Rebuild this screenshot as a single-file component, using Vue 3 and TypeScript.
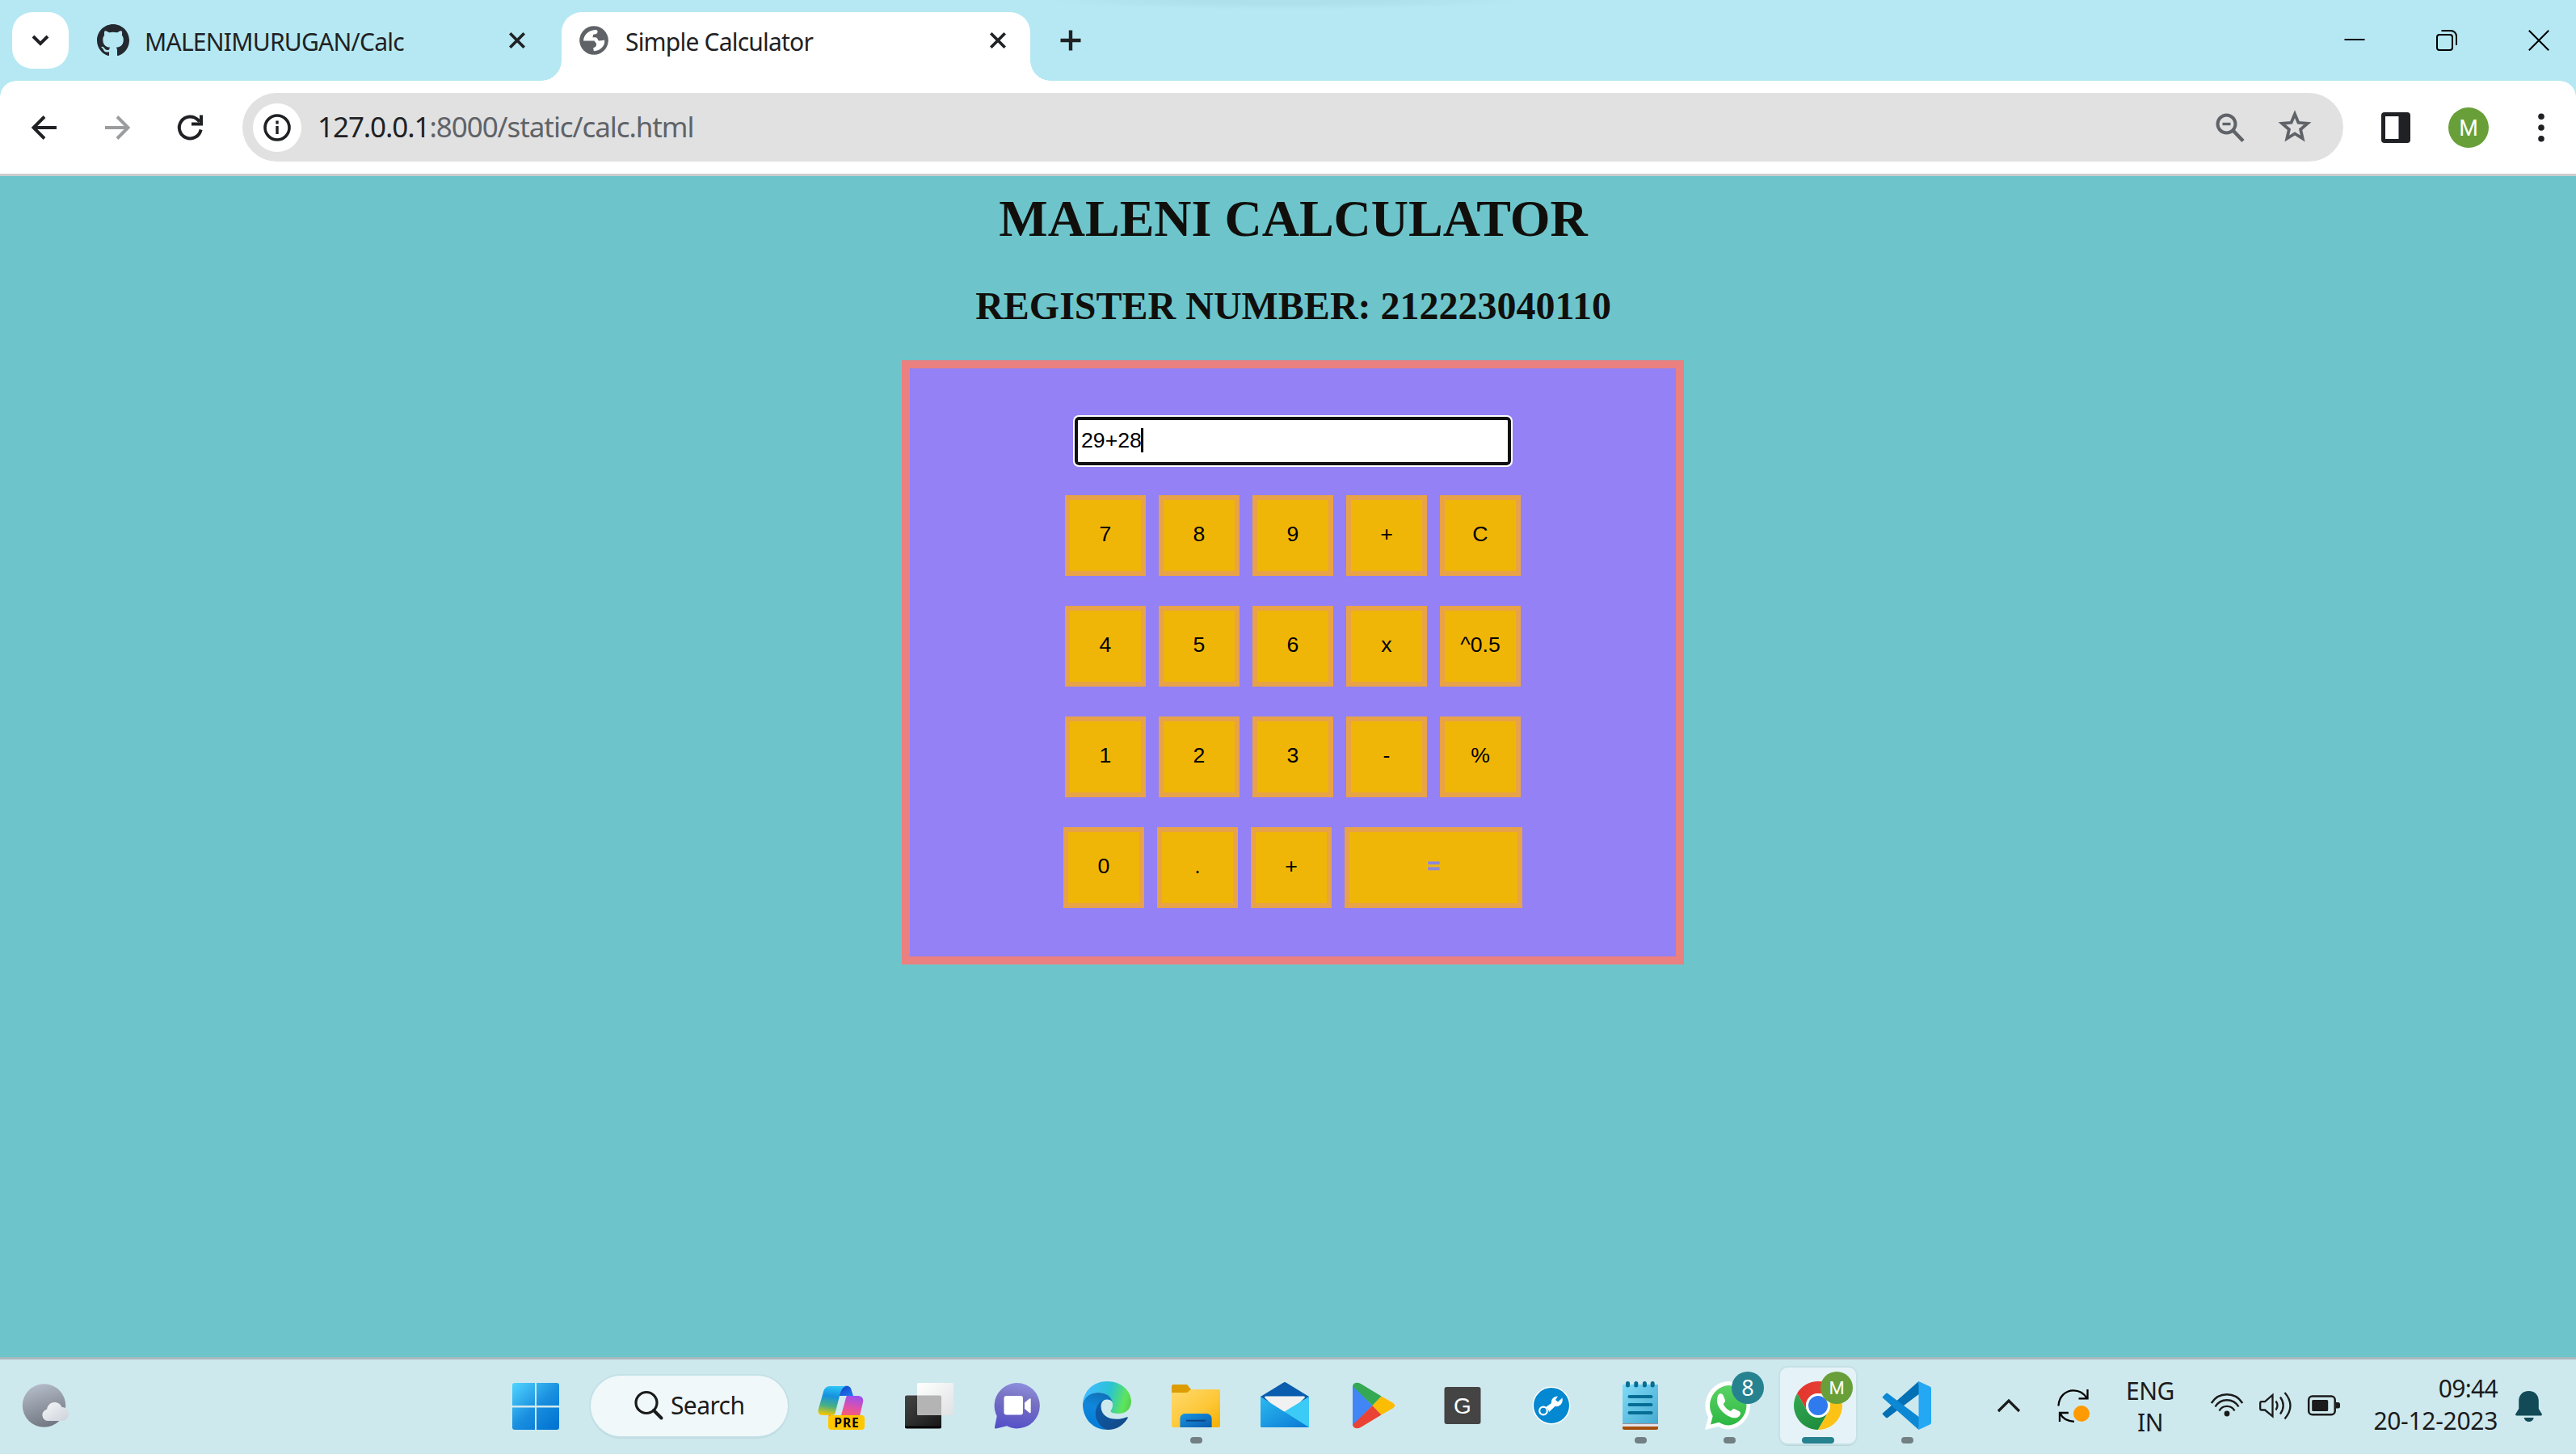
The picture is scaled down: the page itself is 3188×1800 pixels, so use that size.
<script setup lang="ts">
import { ref } from 'vue'

interface Key {
  label: string
  wide?: boolean
}

const rows: Key[][] = [
  [{ label: '7' }, { label: '8' }, { label: '9' }, { label: '+' }, { label: 'C' }],
  [{ label: '4' }, { label: '5' }, { label: '6' }, { label: 'x' }, { label: '^0.5' }],
  [{ label: '1' }, { label: '2' }, { label: '3' }, { label: '-' }, { label: '%' }],
  [{ label: '0' }, { label: '.' }, { label: '+' }, { label: '=', wide: true }],
]

const display = ref('29+28')
</script>

<template>
  <div class="screen">
    <header class="tabstrip">
      <div class="tab-search">
        <svg width="70" height="70" viewBox="0 0 70 70"><path d="M26 30l9 9 9-9" fill="none" stroke="#202124" stroke-width="4" /></svg>
      </div>
      <div class="tab">
        <svg class="github" width="40" height="40" viewBox="0 0 16 16"><path fill="#24292f" d="M8 0C3.58 0 0 3.58 0 8c0 3.54 2.29 6.53 5.47 7.59.4.07.55-.17.55-.38 0-.19-.01-.82-.01-1.49-2.01.37-2.53-.49-2.69-.94-.09-.23-.48-.94-.82-1.13-.28-.15-.68-.52-.01-.53.63-.01 1.08.58 1.23.82.72 1.21 1.87.87 2.33.66.07-.52.28-.87.51-1.07-1.78-.2-3.64-.89-3.64-3.95 0-.87.31-1.59.82-2.15-.08-.2-.36-1.02.08-2.12 0 0 .67-.21 2.2.82.64-.18 1.32-.27 2-.27s1.36.09 2 .27c1.53-1.04 2.2-.82 2.2-.82.44 1.1.16 1.92.08 2.12.51.56.82 1.27.82 2.15 0 3.07-1.87 3.75-3.65 3.95.29.25.54.73.54 1.48 0 1.07-.01 1.93-.01 2.2 0 .21.15.46.55.38A8.01 8.01 0 0 0 16 8c0-4.42-3.58-8-8-8z" /></svg>
        <span class="tab-title repo">MALENIMURUGAN/Calc</span>
        <svg width="20" height="20" viewBox="0 0 20 20"><path d="M1.3 1.3l17.4 17.4M18.7 1.3L1.3 18.7" stroke="#202124" stroke-width="3.7" /></svg>
      </div>
      <div class="tab active">
        <svg width="36" height="36" viewBox="21 22 107 107"><circle cx="74.500" cy="75.500" r="53" fill="#5f6368" /><path d="M36 77C37 55 55 37 84 36l5 8-5 8-12 2-2 10h10c10 2 8 12 14 13l19-2-1-8C120 92 102 112 74 115l-2-11 10-6 2-10-8-11z" fill="#fff" /></svg>
        <span class="tab-title">Simple Calculator</span>
        <svg width="20" height="20" viewBox="0 0 20 20"><path d="M1.3 1.3l17.4 17.4M18.7 1.3L1.3 18.7" stroke="#202124" stroke-width="3.7" /></svg>
      </div>
      <svg class="new-tab" width="26" height="26" viewBox="0 0 26 26"><path d="M13 .5v25M.5 13h25" stroke="#202124" stroke-width="4.400" /></svg>
      <div class="window-buttons">
        <svg width="26" height="26" viewBox="0 0 26 26"><path d="M.5 12h25" stroke="#000" stroke-width="2" /></svg>
        <svg width="26" height="26" viewBox="0 0 26 26"><g fill="none" stroke="#000" stroke-width="2"><rect x="1" y="6" width="19" height="19" rx="3" /><path d="M6.500 1H18a7 7 0 0 1 7 7v11" /></g></svg>
        <svg width="26" height="26" viewBox="0 0 26 26"><path d="M.8.8l24.400 24.400M25.200.8L.8 25.200" stroke="#000" stroke-width="2" /></svg>
      </div>
    </header>

    <nav class="toolbar">
      <svg width="60" height="60" viewBox="0 0 60 60"><path d="M45 30H18M30 16.500L16.500 30 30 43.500" fill="none" stroke="#202124" stroke-width="3.900" /></svg>
      <svg class="forward" width="60" height="60" viewBox="0 0 60 60"><path d="M15 30h27M30 16.500L43.500 30 30 43.500" fill="none" stroke="#9b9c9e" stroke-width="3.900" /></svg>
      <svg width="60" height="60" viewBox="0 0 60 60"><path d="M43.600 32.500A13.500 13.500 0 1 1 40 20.500l2 2" fill="none" stroke="#202124" stroke-width="4" /><path d="M42 14.500h4v13H32v-4h10z" fill="#202124" /></svg>
      <div class="omnibox">
        <span class="site-info">
          <svg width="36" height="36" viewBox="0 0 36 36"><circle cx="18" cy="18" r="15" fill="none" stroke="#202124" stroke-width="3.600" /><path d="M18 16v10M18 9.500v4" stroke="#202124" stroke-width="3.400" /></svg>
        </span>
        <span class="url"><b>127.0.0.1</b>:8000/static/calc.html</span>
        <svg width="36" height="36" viewBox="0 0 36 36"><g fill="none" stroke="#5f6368" stroke-width="4"><circle cx="13.500" cy="13.500" r="11" /><path d="M21.500 21.500L34 34.500" stroke-width="4.500" /><path d="M8.500 13.500h10" stroke-width="3.400" /></g></svg>
        <svg class="star" width="42" height="40" viewBox="0 0 42 40"><path d="M21 5.200l4.400 10.600 11.400 1-8.700 7.500 2.600 11.200L21 29.500l-9.700 6 2.600-11.200-8.700-7.500 11.400-1z" fill="none" stroke="#5f6368" stroke-width="3.800" /></svg>
      </div>
      <svg class="side-panel" width="36" height="38" viewBox="0 0 36 38"><rect width="36" height="38" rx="4" fill="#202124" /><path d="M5 5h16.500v28H5z" fill="#fff" /></svg>
      <span class="avatar">M</span>
      <svg class="menu" width="20" height="40" viewBox="0 0 20 40"><g fill="#202124"><circle cx="10" cy="6.300" r="3.800" /><circle cx="10" cy="20" r="3.800" /><circle cx="10" cy="33.700" r="3.800" /></g></svg>
    </nav>

    <main class="page">
      <h1>MALENI CALCULATOR</h1>
      <h2>REGISTER NUMBER: 212223040110</h2>
      <form class="calculator" @submit.prevent>
        <div class="display"><span>{{ display }}</span><i class="caret"></i></div>
        <div v-for="(row, i) in rows" :key="i" class="key-row">
          <button v-for="(k, j) in row" :key="j" type="button" :class="{ wide: k.wide }">{{ k.label }}</button>
        </div>
      </form>
    </main>

    <footer class="taskbar">
      <svg class="weather" width="60" height="60" viewBox="0 0 60 60">
        <defs>
          <linearGradient id="moon" x1="0.300" y1="0" x2="0.600" y2="1"><stop offset="0" stop-color="#b4bcc9" /><stop offset="1" stop-color="#71767f" /></linearGradient>
          <linearGradient id="cloud" x1="0" y1="0" x2="1" y2="1"><stop offset="0" stop-color="#f6f7f9" /><stop offset="1" stop-color="#ccd2da" /></linearGradient>
        </defs>
        <circle cx="29.500" cy="30" r="26.700" fill="url(#moon)" />
        <path d="M34 49a7.200 7.200 0 0 1-1-14.200c1-5.500 5-8.800 9.500-8.800 4.300 0 7.500 2.200 9 6 4.800-.3 8.500 3.500 8.500 8s-3.500 9-8.500 9z" fill="url(#cloud)" />
      </svg>

      <svg class="start" width="60" height="60" viewBox="0 0 60 60">
        <defs><linearGradient id="win" gradientUnits="userSpaceOnUse" x1="2" y1="2" x2="52" y2="58"><stop offset="0" stop-color="#4fd4ff" /><stop offset="0.550" stop-color="#1a8fdf" /><stop offset="1" stop-color="#0275d2" /></linearGradient></defs>
        <g fill="url(#win)"><path d="M4 2h25v28H1V5a3 3 0 0 1 3-3z" /><path d="M31 2h25a3 3 0 0 1 3 3v25H31z" /><path d="M1 32.500h28V60H4a3 3 0 0 1-3-3z" /><path d="M31 32.500h28V57a3 3 0 0 1-3 3H31z" /></g>
      </svg>

      <div class="search">
        <svg width="36" height="36" viewBox="0 0 36 36"><g fill="none" stroke="#1b1b1b" stroke-width="3.200"><circle cx="15" cy="14.500" r="13" /><path d="M24 24l9.500 9.500" stroke-linecap="round" stroke-width="4" /></g></svg>
        <span>Search</span>
      </div>

      <div class="apps">
        <div class="app">
          <svg width="60" height="60" viewBox="0 0 60 60">
            <defs>
              <linearGradient id="cpA" x1="0.500" y1="0" x2="0.350" y2="1"><stop offset="0" stop-color="#2cc5f6" /><stop offset="0.350" stop-color="#1591df" /><stop offset="0.700" stop-color="#4bb183" /><stop offset="1" stop-color="#f3c600" /></linearGradient>
              <linearGradient id="cpB" x1="0.700" y1="0" x2="0.400" y2="1"><stop offset="0" stop-color="#9d50ec" /><stop offset="0.500" stop-color="#e052a8" /><stop offset="1" stop-color="#ff6558" /></linearGradient>
              <linearGradient id="cpC" x1="0" y1="0" x2="1" y2="1"><stop offset="0" stop-color="#153fc4" /><stop offset="1" stop-color="#1d7df0" /></linearGradient>
            </defs>
            <path d="M35 6c6-1 8 1 9 6l2 6H28c2-8 3-11 7-12z" fill="url(#cpC)" />
            <path d="M17 6h24c-7-1-10 4-12 12l-5 20c-1 3-2 4-4 4H8c-5 0-6-3-5-8l6-21c1-4 4-7 8-7z" fill="url(#cpA)" />
            <path d="M30 19h8l-7 23h-8z" fill="#cdeaf3" />
            <path d="M38 18h14c5 0 7 4 6 8l-4 17c-.5 2-2 3-4 3H18c-2 0-3-2-2.500-4H31l6-22z" fill="url(#cpB)" />
            <rect x="15" y="42" width="45" height="18" rx="4" fill="#ffc700" />
            <text x="38" y="57" text-anchor="middle" class="pre">PRE</text>
          </svg>
        </div>
        <div class="app">
          <svg width="60" height="60" viewBox="0 0 60 60">
            <defs>
              <linearGradient id="tvA" x1="0" y1="0" x2="1" y2="1"><stop offset="0" stop-color="#454545" /><stop offset="1" stop-color="#161616" /></linearGradient>
              <linearGradient id="tvB" x1="0" y1="0" x2="1" y2="1"><stop offset="0" stop-color="#fff" /><stop offset="1" stop-color="#dfe1e2" /></linearGradient>
            </defs>
            <rect x="0" y="17.500" width="45" height="40.500" rx="2" fill="url(#tvA)" /><path d="M0 55.500h45v1a2 2 0 0 1-2 2H2a2 2 0 0 1-2-2z" fill="#050505" />
            <rect x="15" y="2" width="45" height="40" rx="2" fill="url(#tvB)" /><path d="M15 17.500h28a2 2 0 0 1 2 2V42H17a2 2 0 0 1-2-2z" fill="#b4b4b4" />
          </svg>
        </div>
        <div class="app">
          <svg width="60" height="60" viewBox="0 0 60 60">
            <defs><linearGradient id="chat" x1="0.600" y1="0" x2="0.400" y2="1"><stop offset="0" stop-color="#8e8fdf" /><stop offset="0.350" stop-color="#7873c2" /><stop offset="1" stop-color="#5550c8" /></linearGradient></defs>
            <path d="M28.600 2a28.200 28.200 0 0 1 0 56.500c-4.600 0-9-1.200-12.500-3.200L3 58.500c-1.500.3-2.300-.5-2-1.800L3.700 43A28.200 28.200 0 0 1 28.600 2z" fill="url(#chat)" />
            <rect x="12.500" y="18" width="23.500" height="23.500" rx="3" fill="#fff" /><path d="M38 26.500l6-5q1.700-1 1.700 1v15.500q0 2-1.700 1l-6-5z" fill="#fff" />
          </svg>
        </div>
        <div class="app">
          <svg width="60" height="60" viewBox="0 0 60 60">
            <defs>
              <linearGradient id="edA" x1="0" y1="0.500" x2="1" y2="0.700"><stop offset="0.100" stop-color="#3dbcfb" /><stop offset="0.500" stop-color="#2bc3d2" /><stop offset="0.850" stop-color="#5ee55c" /><stop offset="1" stop-color="#54cf50" /></linearGradient>
              <linearGradient id="edB" x1="0.500" y1="0" x2="0.200" y2="1"><stop offset="0" stop-color="#0f73bb" /><stop offset="0.400" stop-color="#1087dc" /><stop offset="1" stop-color="#0078d6" /></linearGradient>
              <linearGradient id="edC" x1="0" y1="0" x2="1" y2="1"><stop offset="0" stop-color="#0c5eae" /><stop offset="1" stop-color="#134783" /></linearGradient>
            </defs>
            <path d="M0 28C1 12 13 0 30 0c18 0 30 12 30 25 0 10-8 15-15 15-6 0-11-1-10.500-3.500C36 34 38 31 36.500 26 34 18 28 14 19 14 10 14 3 18 0 28z" fill="url(#edA)" />
            <path d="M0 28c3-10 10-14 19-14 9 0 16 4 18 12-3-4-8-4-11-2.500C18 28 14 42 20 50c3 6 7 9.500 11 10C13 60 0 47 0 28z" fill="url(#edB)" />
            <path d="M27 22.500C16 27 13.500 40 18 49c3 6 8 10.500 13 11 11 0 20-6 24.700-14.500.4-1.200-.5-1.500-1.700-1C40 50 22.500 46 22.500 31c0-4 2-7 4.500-8.500z" fill="url(#edC)" />
          </svg>
        </div>
        <div class="app">
          <svg width="60" height="60" viewBox="0 0 60 60">
            <defs>
              <linearGradient id="fdA" x1="0" y1="0" x2="1" y2="1"><stop offset="0" stop-color="#ffda6e" /><stop offset="0.600" stop-color="#fdc635" /><stop offset="1" stop-color="#f4b000" /></linearGradient>
              <linearGradient id="fdB" x1="0" y1="0" x2="1" y2="1"><stop offset="0" stop-color="#1795e4" /><stop offset="1" stop-color="#0b5cac" /></linearGradient>
            </defs>
            <path d="M2 4h17l5 6v6H0V6a2 2 0 0 1 2-2z" fill="#dd9d00" />
            <path d="M0 14h18c3 0 4-4 7-4h33a2 2 0 0 1 2 2v43a2 2 0 0 1-2 2H2a2 2 0 0 1-2-2z" fill="url(#fdA)" />
            <path d="M10.400 57V46a6 6 0 0 1 6-6h27.200a6 6 0 0 1 6 6v11z" fill="url(#fdB)" /><path d="M18 48.700h24" stroke="#0a4682" stroke-width="2" />
          </svg>
          <i class="running"></i>
        </div>
        <div class="app">
          <svg width="60" height="60" viewBox="0 0 60 60">
            <defs><linearGradient id="mlA" x1="0" y1="0" x2="1" y2="1"><stop offset="0" stop-color="#2cbaf0" /><stop offset="1" stop-color="#0a78d4" /></linearGradient></defs>
            <path d="M0 19L28.500 1.500q1.500-.8 3 0L60 19v10H0z" fill="#0a5cae" />
            <path d="M5 20q0-1.500 1.500-1.500h47q1.500 0 1.500 1.500L33 42h-6z" fill="#f1f1f2" />
            <path d="M60 19L28 38.500 58 57h2z" fill="#3bcbf6" />
            <path d="M0 19l60 38H1.500A1.500 1.500 0 0 1 0 55.500z" fill="url(#mlA)" />
          </svg>
        </div>
        <div class="app">
          <svg width="60" height="60" viewBox="0 0 60 60">
            <path d="M4 5l24.600 25L4 55z" fill="#4285f4" />
            <path d="M4 6c1-5 6-5 10-3l25.600 15.500L28.600 30z" fill="#34a853" />
            <path d="M4 54c1 5 6 5 10 3l25.600-15.500L28.600 30z" fill="#ea4335" />
            <path d="M39.600 18.500L53.500 26.500q5.500 3.500 0 7l-13.900 8L28.600 30z" fill="#fbbc04" />
          </svg>
        </div>
        <div class="app">
          <svg width="60" height="60" viewBox="0 0 60 60"><rect x="7.500" y="7" width="45" height="46" rx="3" fill="#444" /><text x="30" y="40" text-anchor="middle" class="g-letter">G</text></svg>
        </div>
        <div class="app">
          <svg width="60" height="60" viewBox="0 0 60 60"><circle cx="30" cy="30" r="22.700" fill="#0388d1" stroke="#fff" stroke-width="1.500" /><circle cx="20" cy="36.500" r="4.800" fill="none" stroke="#fff" stroke-width="2.200" /><path d="M23 32l7-5c-.5-5 3-8.500 8-8.500l-3 4.500 3 2.500 5.500-5c1.500 6.500-3 11.500-9 10.500L27 38c-.5-3-2-5-4-6z" fill="#fff" /></svg>
        </div>
        <div class="app">
          <svg width="60" height="60" viewBox="0 0 60 60">
            <defs><linearGradient id="ntA" x1="0" y1="0" x2="1" y2="1"><stop offset="0" stop-color="#80dbf7" /><stop offset="1" stop-color="#45aad0" /></linearGradient></defs>
            <path d="M8 52h44v6a2 2 0 0 1-2 2H10a2 2 0 0 1-2-2z" fill="#a64f0d" /><path d="M8 50h44v6H8z" fill="#e4e2e6" /><path d="M8 51.500h44v1.500H8z" fill="#9b8f94" />
            <path d="M8 4h44v48H10a2 2 0 0 1-2-2z" fill="url(#ntA)" />
            <path d="M16.500 19h27M16.500 29h27M16.500 39h27" stroke="#066d95" stroke-width="4" stroke-linecap="round" />
            <path d="M14.500 2.500v2.500M24.800 2.500v2.500M35.400 2.500v2.500M45.200 2.500v2.500" stroke="#066d95" stroke-width="5" stroke-linecap="round" />
          </svg>
          <i class="running"></i>
        </div>
        <div class="app">
          <svg width="60" height="60" viewBox="0 0 60 60">
            <defs><linearGradient id="waA" x1="0" y1="0" x2="0" y2="1"><stop offset="0" stop-color="#5bd366" /><stop offset="1" stop-color="#2cb742" /></linearGradient></defs>
            <path d="M30 0a30 30 0 0 1 0 59.500c-5 0-9.500-1.300-13.500-3.500L0 60l4.200-15.500A30 30 0 0 1 30 0z" fill="#fff" />
            <path d="M30 5a25 25 0 0 1 0 49.500c-5 0-9-1.300-12.700-3.700L7 53.500 9.700 43A25 25 0 0 1 30 5z" fill="url(#waA)" />
            <path d="M18 15.500c2-.8 3.700 0 4.500 1.800l2.500 6c.6 1.600-1.500 3.800-2.300 5 2 4 5 7 9.300 8.700 1.300-1.300 2.600-3.500 4.200-3l6.500 3.200c1.800 1 1.500 3.300.4 5-1.300 2.200-4.300 3.500-7.800 3-9-1.300-20.300-12-20.300-21 0-4.500 1.500-8 3-8.700z" fill="#fff" />
          </svg>
          <span class="badge count">8</span>
          <i class="running"></i>
        </div>
        <div class="app focused">
          <svg width="60" height="60" viewBox="0 0 60 60">
            <defs>
              <linearGradient id="crR" x1="0" y1="0" x2="1" y2="0"><stop offset="0" stop-color="#e2362f" /><stop offset="1" stop-color="#ea4335" /></linearGradient>
              <linearGradient id="crG" x1="0" y1="0" x2="0.600" y2="1"><stop offset="0" stop-color="#34a853" /><stop offset="1" stop-color="#1e8e3e" /></linearGradient>
            </defs>
            <path d="M4.020 15A30 30 0 0 1 55.980 15H30A15 15 0 0 0 17.010 37.500z" fill="url(#crR)" />
            <path d="M4.020 15L17.010 37.500A15 15 0 0 0 42.990 37.500L30 60A30 30 0 0 1 4.020 15z" fill="url(#crG)" />
            <path d="M55.980 15A30 30 0 0 1 30 60L42.990 37.500A15 15 0 0 0 30 15z" fill="#fcc316" />
            <circle cx="30" cy="30" r="15" fill="#fff" /><circle cx="30" cy="30" r="12" fill="#2f7bee" />
          </svg>
          <span class="badge profile">M</span>
          <i class="running current"></i>
        </div>
        <div class="app">
          <svg width="60" height="60" viewBox="0 0 60 60">
            <path d="M44.500 0L0 39.500q-.5 1 0 1.500l4 4q1 .8 2.200 0L46 15z" fill="#0170b5" />
            <path d="M44.500 60L0 20.500q-.5-1 0-1.500l4-4q1-.8 2.200 0L46 45z" fill="#0d88d4" />
            <path d="M44.500 0L58.500 6.500Q60 7.300 60 9v42q0 1.700-1.500 2.500L44.500 60z" fill="#24a8f3" />
          </svg>
          <i class="running"></i>
        </div>
      </div>

      <div class="tray">
        <svg width="60" height="60" viewBox="0 0 60 60"><path d="M17 37l13-13 13 13" fill="none" stroke="#1b1b1b" stroke-width="3.200" /></svg>
        <svg class="sync" width="60" height="60" viewBox="0 0 60 60"><g fill="none" stroke="#000" stroke-width="2.300"><path d="M11.500 30.500C12 19 20 11.300 30 11.300c7 0 13 3.500 16.500 9.500M47.500 10v11.300H36.500M13 50V39h11M13.500 39.500c3 6.500 9 10 17.500 10.300" /></g><circle cx="40" cy="40" r="10" fill="#ff9a00" /></svg>
        <div class="language"><span>ENG</span><span>IN</span></div>
        <svg width="40" height="60" viewBox="0 0 40 60"><g fill="none" stroke="#1b1b1b" stroke-width="2.400"><path d="M.8 27a22.500 22.500 0 0 1 38.400 0M5.500 31.500a16.800 16.800 0 0 1 29 0M10.500 36.500a10.800 10.800 0 0 1 19 0" /></g><circle cx="20" cy="40" r="3.400" fill="#1b1b1b" /></svg>
        <svg class="tray-icon" width="42" height="60" viewBox="0 0 42 60"><g fill="none" stroke="#1b1b1b" stroke-width="2.300"><path d="M1.200 27q0-1.800 1.800-1.800h4L16.500 17v26.300L7 35.500H3q-1.800 0-1.800-1.800z" /><path d="M20.500 24.500q4 5.500 0 11M26 19.500q7.500 10.500 0 21M31.500 14q14 16.200 0 32.400" /></g></svg>
        <svg class="tray-icon" width="42" height="60" viewBox="0 0 42 60"><rect x="1.200" y="18.500" width="32.500" height="22.700" rx="4.500" fill="none" stroke="#1b1b1b" stroke-width="2.500" /><rect x="5.200" y="23" width="20" height="14" rx="1.500" fill="#1b1b1b" /><path d="M35 26h2.500q2.500 0 2.500 2.500v2.500q0 2.500-2.500 2.500H35z" fill="#1b1b1b" /></svg>
        <div class="clock"><span class="time">09:44</span><span>20-12-2023</span></div>
        <svg class="bell" width="40" height="60" viewBox="0 0 40 60"><path d="M19.500 12c8 0 12.300 5.500 12.300 12.500V34l4 6.500q.7 2-1.300 2H4.500q-2 0-1.300-2l4-6.500v-9.500C7.200 17.500 11.500 12 19.500 12zM13.700 45h12c-.5 3-3 5-6 5s-5.500-2-6-5z" fill="#124b57" /></svg>
      </div>
    </footer>
  </div>
</template>

<style>
body {
  background: #6dc5cb;
}
</style>

<style scoped>
.screen {
  display: flex;
  flex-direction: column;
  width: 3188px;
  height: 1800px;
  overflow: hidden;
  background: #6dc5cb;
  font-family: 'Noto Sans', sans-serif;
}
svg {
  display: block;
  flex: none;
  overflow: visible;
}

/* tab strip */
.tabstrip {
  display: flex;
  flex: none;
  height: 100px;
  background: radial-gradient(ellipse 300px 12px at 1590px 0, #aee0eb 40%, #b5e8f3) #b5e8f3;
}
.tab-search {
  width: 70px;
  height: 70px;
  margin: 15px 15px 0 15px;
  border-radius: 25px;
  background: #fff;
}
.tab {
  display: flex;
  align-items: center;
  box-sizing: border-box;
  width: 595px;
  height: 85px;
  margin-top: 15px;
  padding: 0 45px 15px 20px;
  color: #202124;
  font-size: 30px;
}
.tab.active {
  position: relative;
  width: 580px;
  padding: 0 30px 15px 22px;
  border-radius: 25px 25px 0 0;
  background: #fff;
}
.tab.active::before,
.tab.active::after {
  content: '';
  position: absolute;
  bottom: 0;
  width: 25px;
  height: 25px;
}
.tab.active::before {
  left: -25px;
  background: radial-gradient(circle at 0 0, transparent 24.500px, #fff 25px);
}
.tab.active::after {
  right: -25px;
  background: radial-gradient(circle at 100% 0, transparent 24.500px, #fff 25px);
}
.tab-title {
  flex: 1;
  margin-left: 21px;
  padding-top: 3px;
  letter-spacing: -0.800px;
  white-space: nowrap;
}
.tab-title.repo {
  margin-left: 19px;
  letter-spacing: -0.750px;
}
.new-tab {
  margin: 37px 0 0 37px;
}
.window-buttons {
  display: flex;
  gap: 88px;
  margin: 37px 33px 0 auto;
}

/* toolbar */
.toolbar {
  display: flex;
  flex: none;
  align-items: center;
  height: 115px;
  padding-left: 25px;
  border-bottom: 3px solid #cccdcd;
  background:
    radial-gradient(circle at 20px 20px, #fff 19.500px, #b5e8f3 20px) 0 0 / 20px 20px no-repeat,
    radial-gradient(circle at 0 20px, #fff 19.500px, #b5e8f3 20px) 100% 0 / 20px 20px no-repeat,
    #fff;
}
.forward {
  margin: 0 30px;
}
.omnibox {
  display: flex;
  align-items: center;
  box-sizing: border-box;
  width: 2600px;
  height: 85px;
  margin-left: 35px;
  padding: 0 39px 0 13px;
  border-radius: 43px;
  background: #e1e1e1;
}
.site-info {
  display: flex;
  align-items: center;
  justify-content: center;
  width: 60px;
  height: 60px;
  border-radius: 50%;
  background: #fff;
}
.url {
  flex: 1;
  margin-left: 20px;
  padding-bottom: 2px;
  color: #5f6368;
  font-size: 35px;
  line-height: 48px;
  letter-spacing: -1.080px;
}
.url b {
  color: #202124;
  font-weight: 400;
}
.star {
  margin: -4px 0 0 41px;
}
.side-panel {
  margin-left: 47px;
}
.avatar {
  width: 50px;
  height: 50px;
  margin-left: 47px;
  border-radius: 50%;
  background: #689f38;
  color: #fff;
  font: 27px/52px Roboto, sans-serif;
  text-align: center;
}
.menu {
  margin-left: 55px;
}

/* page */
.page {
  flex: 1;
  padding: 16px 0 0 13px;
  color: #110f0c;
  font-family: 'Liberation Serif', serif;
  text-align: center;
}
h1 {
  margin: 0 0 43px;
  font-size: 64px;
  line-height: 74px;
}
h2 {
  margin: 0 0 40px;
  font-size: 48px;
  line-height: 55px;
}
.calculator {
  box-sizing: border-box;
  width: 968px;
  height: 748px;
  margin: 0 auto 0 1103px;
  padding-top: 58px;
  border: 10px solid #ea8080;
  background: #9381f5;
}
.display {
  display: flex;
  align-items: center;
  box-sizing: border-box;
  width: 544px;
  height: 64px;
  margin: 0 auto 35px;
  padding: 0 0 2px 8px;
  border: 2px solid #fff;
  border-radius: 7px;
  background: #fff;
  box-shadow: inset 0 0 0 4px #110f12;
  color: #000;
  font: 26.670px/30px 'Liberation Sans', sans-serif;
}
.caret {
  width: 3px;
  height: 30px;
  margin-left: -1px;
  background: #000;
}
.key-row {
  display: flex;
  justify-content: center;
  gap: 16px;
  margin-bottom: 37px;
}
button {
  box-sizing: border-box;
  width: 100px;
  height: 100px;
  margin: 0;
  padding: 0 0 3px;
  border: 6px solid #e8a247;
  border-radius: 0;
  background: #efb608;
  color: #000;
  font: 26.670px 'Liberation Sans', sans-serif;
}
button.wide {
  width: 220px;
  color: #8a86e0;
  font-weight: 700;
  -webkit-text-stroke: 0.800px #8a86e0;
}

/* taskbar */
.taskbar {
  display: flex;
  flex: none;
  align-items: center;
  box-sizing: border-box;
  height: 120px;
  padding-bottom: 3px;
  border-top: 3px solid #aab9be;
  background: #cee9ee;
  color: #1b1b1b;
  font-size: 30px;
}
.weather {
  margin-left: 25px;
}
.start {
  margin-left: 548px;
}
.search {
  display: flex;
  align-items: center;
  box-sizing: border-box;
  width: 244px;
  height: 75px;
  margin-left: 38px;
  padding-left: 54px;
  border-radius: 38px;
  background: #f0f8fa;
  box-shadow: 0 0 0 2px #c4e0e7, 0 2px 0 1px #bfd8de;
}
.search span {
  margin-left: 9px;
  padding-bottom: 1px;
  letter-spacing: -0.600px;
}
.apps {
  display: flex;
  margin-left: 10px;
}
.app {
  position: relative;
  display: flex;
  align-items: center;
  justify-content: center;
  width: 110px;
  height: 94px;
}
.app.focused {
  width: 94px;
  margin: 0 8px;
  border-radius: 9px;
  background: #e5f3f8;
  box-shadow: 0 0 0 2px #c6e1e6, 0 2px 0 1px #bcd5da;
}
.running {
  position: absolute;
  bottom: 0;
  left: 50%;
  width: 15px;
  height: 8px;
  margin-left: -7.500px;
  border-radius: 4px;
  background: #728083;
}
.running.current {
  width: 40px;
  margin-left: -20px;
  background: #26828f;
}
.badge {
  position: absolute;
  top: 5px;
  width: 40px;
  height: 40px;
  border-radius: 50%;
  color: #fff;
  text-align: center;
}
.badge.count {
  left: 58px;
  background: #26828f;
  font-size: 27px;
  line-height: 39px;
}
.badge.profile {
  left: 50px;
  background: #689f38;
  font: 22px/41px Roboto, sans-serif;
}
.pre {
  font: 700 15.500px 'Noto Sans', sans-serif;
  letter-spacing: 1px;
}
.g-letter {
  fill: #fff;
  font: 28px 'Liberation Sans', sans-serif;
}
.tray {
  display: flex;
  align-items: center;
  margin-left: 41px;
}
.sync {
  margin-left: 20px;
}
.language {
  display: flex;
  flex-direction: column;
  width: 90px;
  margin: 0 30px 0 20px;
  padding-top: 2px;
  line-height: 39px;
  letter-spacing: -0.500px;
  text-align: center;
}
.tray-icon {
  margin: 0 -2px 0 20px;
}
.clock {
  display: flex;
  flex-direction: column;
  width: 175px;
  margin-left: 20px;
  padding-bottom: 2px;
  line-height: 40px;
  letter-spacing: -0.300px;
  text-align: right;
}
.clock .time {
  letter-spacing: -0.700px;
}
.bell {
  margin-left: 19px;
}
</style>
